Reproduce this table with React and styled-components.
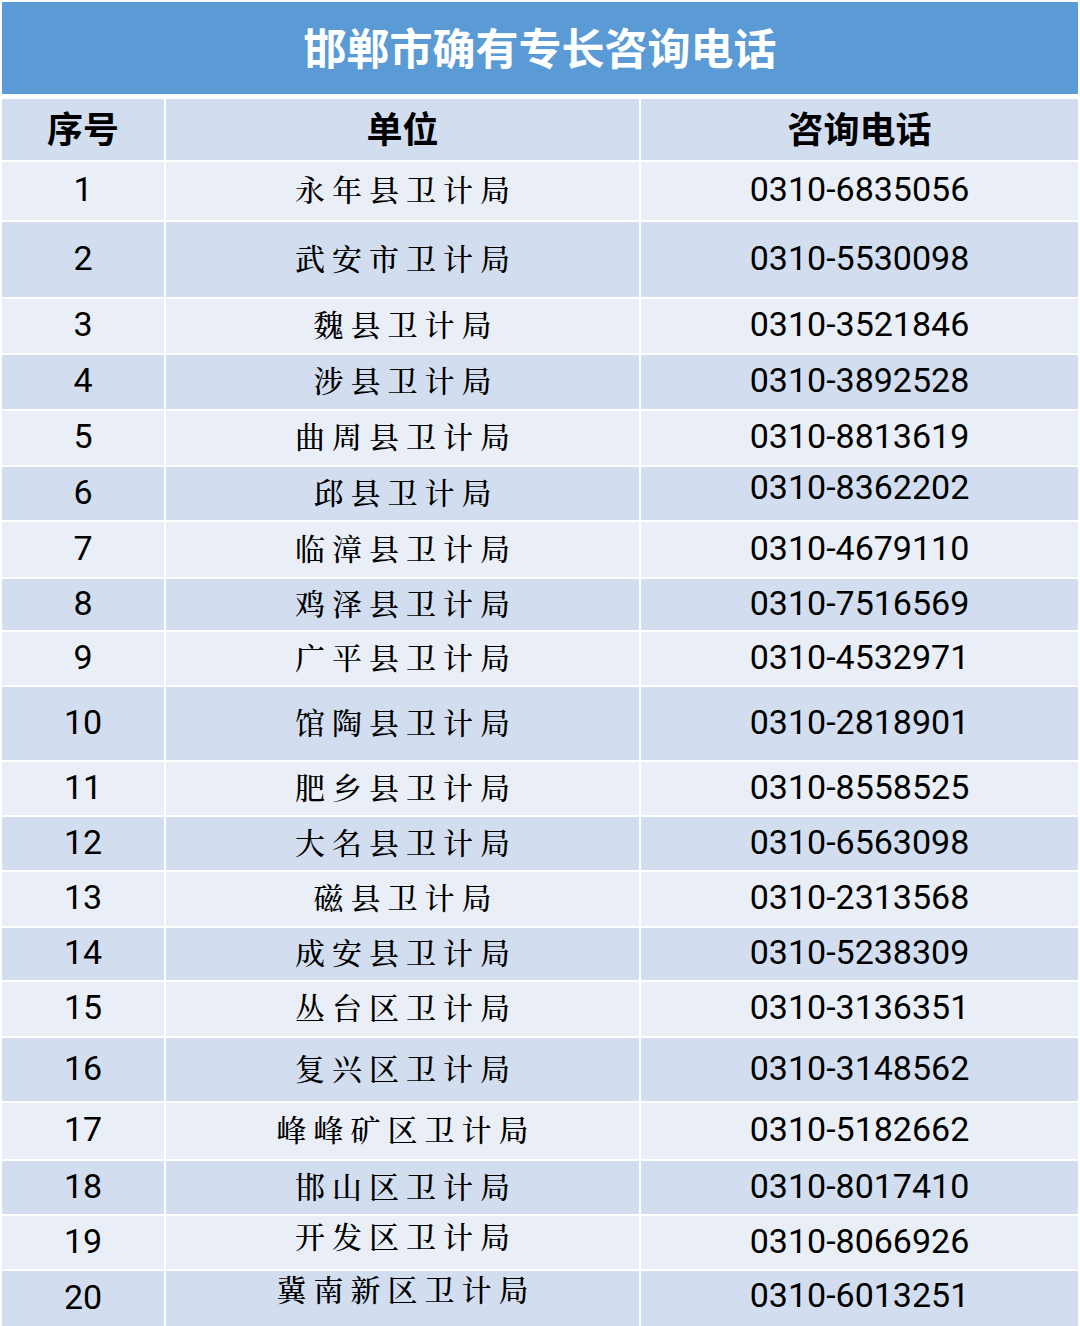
import React from "react";
import styled, { createGlobalStyle } from "styled-components";

const Global = createGlobalStyle`
  html, body { margin: 0; padding: 0; background: #ffffff; }
  body { width: 1080px; }
`;

const Page = styled.div`
  padding: 2px 2px 0 2px;
  width: 1076px;
`;

const TitleBar = styled.div`
  height: 92px;
  background: #5b9bd5;
  display: flex;
  align-items: center;
  justify-content: center;
  color: #ffffff;
  font-family: "Noto Sans CJK SC", "Noto Sans", sans-serif;
  font-weight: 700;
  font-size: 43px;
  margin-bottom: 5px;
  padding-bottom: 4px;
  box-sizing: border-box;
`;

const Grid = styled.div`
  display: grid;
  grid-template-columns: 162px 473px 437px;
  column-gap: 2px;
  row-gap: 2px;
`;

const Cell = styled.div`
  height: ${(p) => p.$h}px;
  background: ${(p) => (p.$dark ? "#d2deef" : "#eaeff7")};
  display: flex;
  align-items: center;
  justify-content: center;
  color: #000000;
  box-sizing: border-box;
`;

const HeadText = styled.span`
  font-family: "Noto Sans CJK SC", "Noto Sans", sans-serif;
  font-weight: 700;
  font-size: 36px;
  line-height: 1;
  transform: translateY(-3px);
`;

const NumText = styled.span`
  font-family: Roboto, "Noto Sans", sans-serif;
  font-size: 34px;
  line-height: 1;
  color: #000;
  transform: translateY(${(p) => (p.$dy || 0) - 2}px);
`;

const UnitText = styled.span`
  font-family: "AR PL UKai CN", "Noto Serif CJK SC", "Noto Sans CJK SC", serif;
  font-size: 30px;
  font-weight: 500;
  letter-spacing: 7px;
  padding-left: 7px;
  line-height: 1;
  color: #000;
  transform: translateY(${(p) => (p.$dy || 0) - 3}px);
`;

const rows = [
  ["永年县卫计局", "0310-6835056", 58],
  ["武安市卫计局", "0310-5530098", 75],
  ["魏县卫计局", "0310-3521846", 54],
  ["涉县卫计局", "0310-3892528", 54],
  ["曲周县卫计局", "0310-8813619", 54],
  ["邱县卫计局", "0310-8362202", 53, 0, -5],
  ["临漳县卫计局", "0310-4679110", 55],
  ["鸡泽县卫计局", "0310-7516569", 51],
  ["广平县卫计局", "0310-4532971", 53],
  ["馆陶县卫计局", "0310-2818901", 73],
  ["肥乡县卫计局", "0310-8558525", 53],
  ["大名县卫计局", "0310-6563098", 53],
  ["磁县卫计局", "0310-2313568", 54],
  ["成安县卫计局", "0310-5238309", 52],
  ["丛台区卫计局", "0310-3136351", 54],
  ["复兴区卫计局", "0310-3148562", 63],
  ["峰峰矿区卫计局", "0310-5182662", 56],
  ["邯山区卫计局", "0310-8017410", 53],
  ["开发区卫计局", "0310-8066926", 53, -5, 0],
  ["冀南新区卫计局", "0310-6013251", 55, -8, -2],
];

export default function App() {
  return (
    <Page>
      <Global />
      <TitleBar>邯郸市确有专长咨询电话</TitleBar>
      <Grid>
        <Cell $h={61} $dark>
          <HeadText>序号</HeadText>
        </Cell>
        <Cell $h={61} $dark>
          <HeadText>单位</HeadText>
        </Cell>
        <Cell $h={61} $dark>
          <HeadText>咨询电话</HeadText>
        </Cell>
        {rows.map(([unit, phone, h, du, dp], i) => {
          const dark = i % 2 === 1;
          return (
            <React.Fragment key={i}>
              <Cell $h={h} $dark={dark}>
                <NumText>{i + 1}</NumText>
              </Cell>
              <Cell $h={h} $dark={dark}>
                <UnitText $dy={du}>{unit}</UnitText>
              </Cell>
              <Cell $h={h} $dark={dark}>
                <NumText $dy={dp}>{phone}</NumText>
              </Cell>
            </React.Fragment>
          );
        })}
      </Grid>
    </Page>
  );
}
